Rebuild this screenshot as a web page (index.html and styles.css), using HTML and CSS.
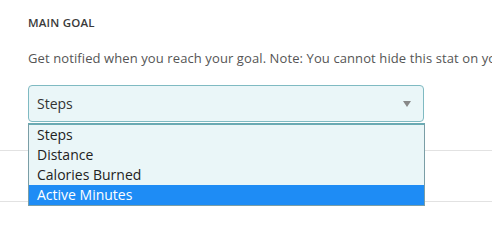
FILE: index.html
```html
<!DOCTYPE html>
<html>
<head>
<meta charset="utf-8">
<link rel="stylesheet" href="styles.css">
</head>
<body>
<div class="page">
  <div class="section">
    <h3 class="label">MAIN GOAL</h3>
    <p class="desc">Get notified when you reach your goal. Note: You cannot hide this stat on your dashboard.</p>
    <div class="select-wrap">
      <div class="select">
        <span class="value">Steps</span>
        <span class="arrow"></span>
      </div>
      <ul class="menu">
        <li>Steps</li>
        <li>Distance</li>
        <li>Calories Burned</li>
        <li class="active">Active Minutes</li>
      </ul>
    </div>
  </div>
  <div class="row row-first"></div>
  <div class="row"></div>
</div>
</body>
</html>
```

FILE: styles.css
```css
html, body {
  margin: 0;
  padding: 0;
  background: #fff;
  overflow: hidden;
}
body {
  font-family: "Open Sans", "Liberation Sans", sans-serif;
  color: #333;
}
.page {
  width: 492px;
  height: 213px;
  overflow: hidden;
}
.section {
  padding: 16px 0 0 28px;
}
.label {
  margin: 0;
  font-size: 11.5px;
  font-weight: 600;
  letter-spacing: 0.2px;
  color: #3a3a3a;
  line-height: 14px;
}
.desc {
  margin: 19px 0 0;
  font-size: 13px;
  letter-spacing: 0.1px;
  line-height: 18px;
  color: #555;
  white-space: nowrap;
}
.select-wrap {
  position: relative;
  width: 396px;
  margin-top: 18px;
}
.select {
  box-sizing: border-box;
  height: 37px;
  border: 1px solid #7fbac2;
  border-radius: 4px;
  background: #eaf6f8;
  display: flex;
  align-items: center;
  padding: 0 12px 0 8px;
  justify-content: space-between;
}
.value {
  font-size: 14px;
  color: #333;
}
.arrow {
  width: 0;
  height: 0;
  border-left: 4px solid transparent;
  border-right: 4px solid transparent;
  border-top: 6px solid #888;
}
.menu {
  position: absolute;
  left: 0;
  top: 38px;
  width: 397px;
  box-sizing: border-box;
  margin: 0;
  padding: 0;
  list-style: none;
  background: #eaf6f8;
  border: 1px solid #7a9ea6;
  border-top: 2px solid #6aaab3;
  z-index: 2;
}
.menu li {
  font-size: 14px;
  line-height: 20px;
  height: 20px;
  padding-left: 8px;
  color: #222;
}
.menu li.active {
  background: #1e8cf5;
  color: #fff;
}
.row {
  height: 50px;
  border-bottom: 1px solid #e2e2e2;
}
.row-first {
  height: 28px;
}
```
